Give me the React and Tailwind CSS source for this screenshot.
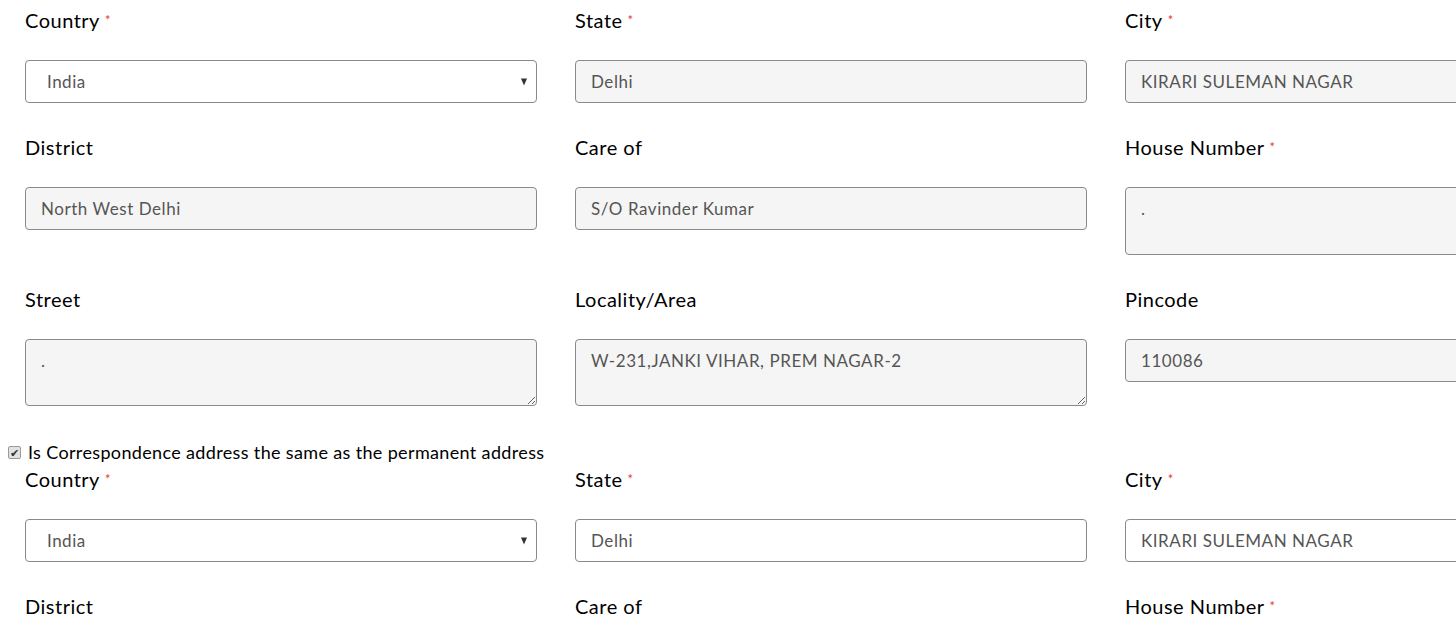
import React from 'react';

const font = { fontFamily: 'Lato, "Open Sans", sans-serif' };

const Label = ({ text, required }) => (
    <label className="block text-[20px] leading-[27px] mb-[26px] text-black whitespace-nowrap tracking-[0.5px]">
        {text}
        {required && <span className="text-[#e53935] text-[13px] align-top ml-[5px]">*</span>}
    </label>
);

const Field = ({ label, required, value, type = 'input', disabled = true, height = 'h-[43px]' }) => {
    const bg = disabled ? 'bg-[#f5f5f5]' : 'bg-white';
    return (
        <div className="mb-[31px]">
            <Label text={label} required={required} />
            {type === 'select' && (
                <div className="relative h-[43px] border border-[#8a8a8a] rounded-[4px] bg-white flex items-center pl-[21px] text-[17px] text-[#555] tracking-[0.5px]">
                    India
                    {/* select arrow */}
                    <span className="absolute right-[9px] top-1/2 -translate-y-1/2 w-0 h-0 border-l-[3.5px] border-r-[3.5px] border-t-[7px] border-l-transparent border-r-transparent border-t-[#333]" />
                </div>
            )}
            {type === 'input' && (
                <input
                    readOnly
                    value={value}
                    className={`block w-full ${height} border border-[#8a8a8a] rounded-[4px] ${bg} px-[15px] text-[17px] text-[#555] tracking-[0.55px] outline-none`}
                    style={font}
                />
            )}
            {type === 'textarea' && (
                <textarea
                    readOnly
                    value={value}
                    className={`block w-full ${height} border border-[#8a8a8a] rounded-[4px] ${bg} px-[15px] pt-[8px] text-[17px] text-[#555] tracking-[0.55px] outline-none`}
                    style={font}
                />
            )}
        </div>
    );
};

const AddressBlock = ({ disabledTop }) => (
    <div className="grid grid-cols-[512px_512px_512px] gap-x-[38px] items-start pl-[25px]">
        <Field label="Country" required type="select" />
        <Field label="State" required value="Delhi" disabled={disabledTop} />
        <Field label="City" required value="KIRARI SULEMAN NAGAR" disabled={disabledTop} />

        <Field label="District" value="North West Delhi" />
        <Field label="Care of" value="S/O Ravinder Kumar" />
        <Field label="House Number" required type="textarea" value="." height="h-[68px]" />

        <Field label="Street" type="textarea" value="." height="h-[67px]" />
        <Field label="Locality/Area" type="textarea" value="W-231,JANKI VIHAR, PREM NAGAR-2" height="h-[67px]" />
        <Field label="Pincode" value="110086" />
    </div>
);

export default function App() {
    return (
        <div className="w-[1456px] h-[633px] overflow-hidden bg-white pt-[7px]" style={font}>
            <AddressBlock disabledTop />

            {/* same-as-permanent checkbox */}
            <div className="flex items-center h-[28px] mt-[1px] pl-[8px] text-[18px] text-black tracking-[0.35px]">
                <span className="w-[13px] h-[13px] mr-[7px] rounded-[2px] border border-[#9a9a9a] bg-[#e2e2e2] flex items-center justify-center text-[11px] leading-none text-[#333] tracking-normal">✔</span>
                Is Correspondence address the same as the permanent address
            </div>

            <AddressBlock disabledTop={false} />
        </div>
    );
}
